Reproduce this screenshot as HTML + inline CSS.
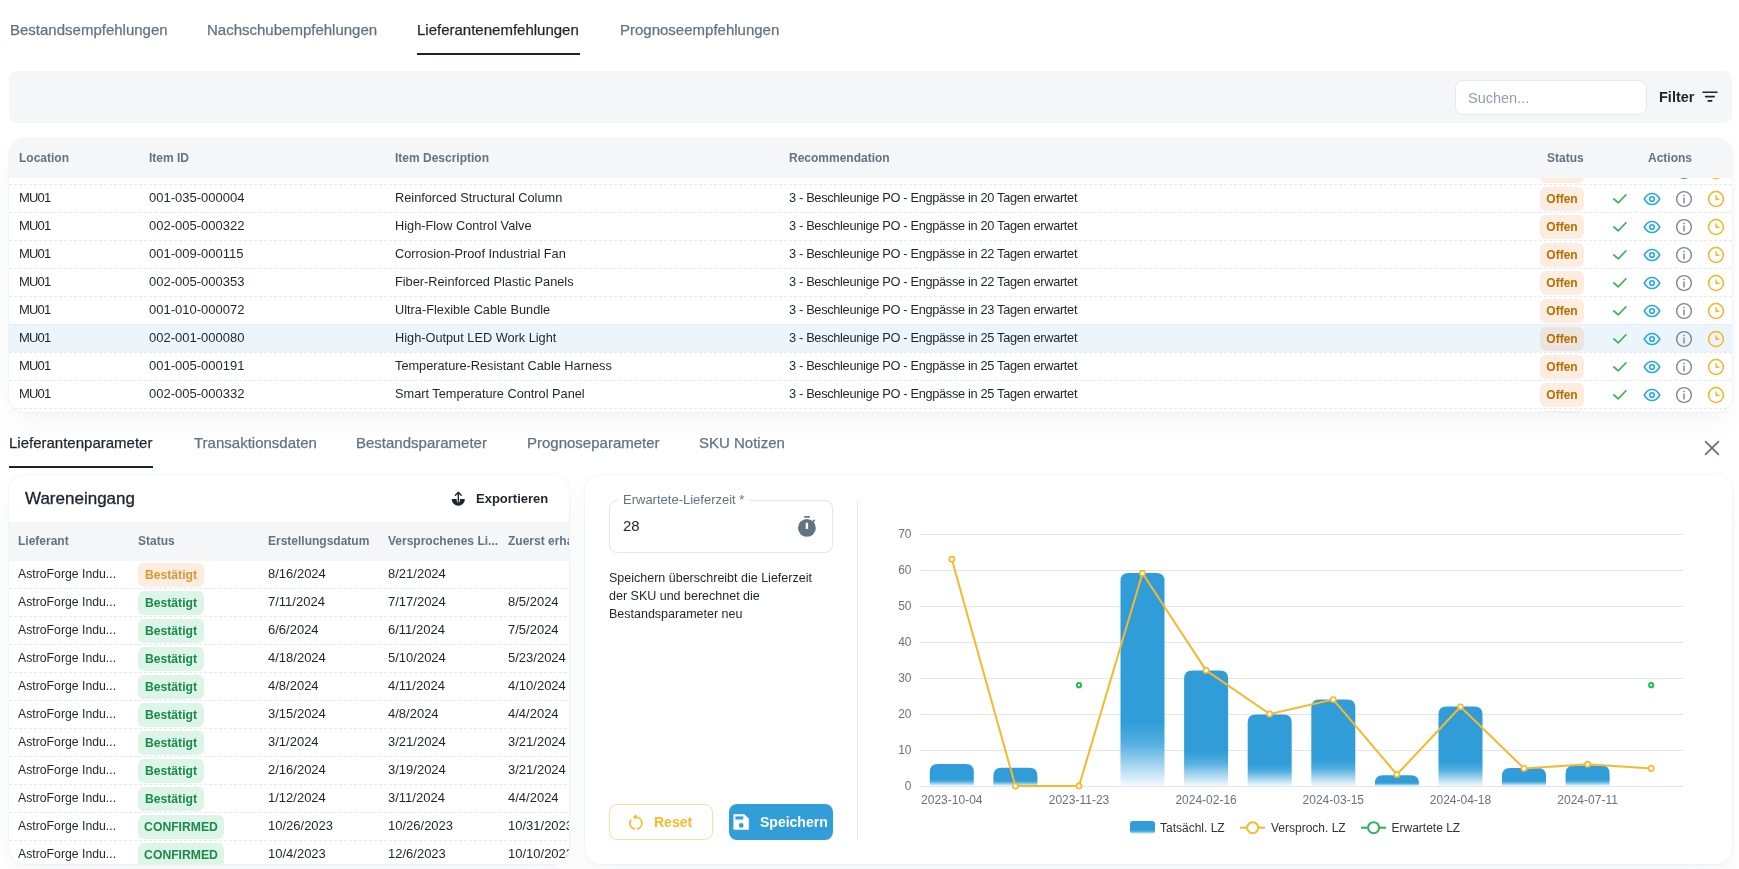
<!DOCTYPE html>
<html><head><meta charset="utf-8">
<style>
*{box-sizing:border-box;margin:0;padding:0}
html,body{width:1739px;height:869px;overflow:hidden;background:#fff;will-change:transform;font-family:"Liberation Sans",sans-serif;color:#1C252E}
.tab{position:absolute;font-size:15px;color:#637381;white-space:nowrap;line-height:18px;-webkit-text-stroke:0.25px currentColor}
.tab.on{color:#1C252E}
.uline{position:absolute;height:2px;background:#1A222B}
.filterbar{position:absolute;left:9px;top:71px;width:1723px;height:52px;background:#F4F6F8;border-radius:8px}
.search{position:absolute;left:1455px;top:80px;width:192px;height:35px;background:#fff;border:1px solid #E6E9EC;border-radius:8px}
.search span{position:absolute;left:12px;top:9px;font-size:14.5px;color:#919EAB;line-height:16px}
.filt{position:absolute;left:1659px;top:89px;font-size:14.5px;font-weight:bold;color:#1C252E;line-height:16px}
.card{position:absolute;background:#fff;border-radius:16px;box-shadow:0 0 2px 0 rgba(145,158,171,0.24),0 12px 24px -4px rgba(145,158,171,0.11);overflow:hidden}
.thead{position:absolute;left:0;top:0;right:0;height:40px;background:#F4F6F8}
.th{position:absolute;top:0;font-size:12px;font-weight:bold;color:#637381;white-space:nowrap;line-height:40px}
.tbody{position:absolute;left:0;top:40px;right:0;bottom:0;overflow:hidden}
.trow{position:absolute;left:0;right:0;height:28px;background-image:linear-gradient(to right,#E6E9ED 3px,transparent 3px);background-size:5px 1px;background-repeat:repeat-x;background-position:0 0}
.trow.hl{background-color:#EDF5FC}
.td{position:absolute;top:0;font-size:13px;color:#1C252E;white-space:nowrap;line-height:27px}
.desc{font-size:12.75px}
.rec{letter-spacing:-0.33px;font-size:12.8px;line-height:28px}
.badge{position:absolute;border-radius:6px;font-weight:bold;font-size:12px;text-align:center;line-height:24px;height:24px}
.offen{background:rgba(243,150,80,0.17);color:#B76E00;width:44px}
.ic{position:absolute;top:6px}
.ctitle{position:absolute;left:16px;top:15px;font-size:17px;-webkit-text-stroke:0.35px #1C252E;color:#1C252E;line-height:18px}
.exp{position:absolute;left:467px;top:16px;font-size:13px;font-weight:bold;color:#1C252E;line-height:16px}
.lhead{position:absolute;left:0;top:47px;width:560px;height:39px;background:#F4F6F8}
.lhead .th{line-height:39px}
.lrow{position:absolute;left:0;width:558px;height:28px;background-image:linear-gradient(to right,#E6E9ED 3px,transparent 3px);background-size:5px 1px;background-repeat:repeat-x;background-position:0 27px}
.ld{position:absolute;top:0;font-size:13px;color:#1C252E;white-space:nowrap;line-height:26.5px}
.astro{font-size:12.25px}
.lrow .badge{top:2px;height:23.5px;line-height:25px;font-size:12.2px}
.bo{background:#FDEDE0;color:#D69A33}
.bg{background:#DDF5E6;color:#1B8A4C}
.flabel{position:absolute;left:624px;top:492px;font-size:13px;color:#637381;line-height:15px;background:#fff;padding:0 5px;margin-left:-6px}
.fbox{position:absolute;left:609px;top:500px;width:224px;height:53px;border:1px solid #E3E7EB;border-radius:8px}
.fval{position:absolute;left:623px;top:517px;font-size:15px;color:#1C252E;line-height:18px}
.fdesc{position:absolute;left:609px;top:569px;width:215px;font-size:12.5px;color:#1C252E;line-height:18px}
.btn{position:absolute;top:804px;height:36px;border-radius:8px;font-size:14px;font-weight:bold;line-height:36px}
</style></head>
<body>
<div class="tab" style="left:10px;top:21px">Bestandsempfehlungen</div>
<div class="tab" style="left:207px;top:21px">Nachschubempfehlungen</div>
<div class="tab on" style="left:417px;top:21px">Lieferantenemfehlungen</div>
<div class="tab" style="left:620px;top:21px">Prognoseempfehlungen</div>
<div class="uline" style="left:417px;top:53px;width:163px"></div>

<div class="filterbar"></div>
<div class="search"><span>Suchen...</span></div>
<div class="filt">Filter</div>
<svg style="position:absolute;left:1701px;top:90px" width="18" height="14" viewBox="0 0 18 14"><path d="M2 2.3H16M4.6 6.6H13.2M7.2 10.9H10.7" stroke="#1C252E" stroke-width="1.6" stroke-linecap="round"/></svg>

<div class="card" style="left:9px;top:138px;width:1723px;height:274px">
 <div class="thead">
  <span class="th" style="left:10px">Location</span>
  <span class="th" style="left:140px">Item ID</span>
  <span class="th" style="left:386px">Item Description</span>
  <span class="th" style="left:780px">Recommendation</span>
  <span class="th" style="left:1538px">Status</span>
  <span class="th" style="left:1639px">Actions</span>
 </div>
 <div class="tbody">
<div class="trow" style="top:-22px"><div class="badge offen" style="left:1531px;top:3px">Offen</div><svg class="ic" style="left:1602px" width="18" height="18" viewBox="0 0 18 18"><path d="M2.8 8.9 L7.3 12.8 L15 4.8" fill="none" stroke="#2AB24E" stroke-width="1.6" stroke-linecap="round" stroke-linejoin="round"/></svg><svg class="ic" style="left:1634px" width="18" height="18" viewBox="0 0 18 18"><path d="M1.2 9 C3.3 5.4 6 3.4 9 3.4 C12 3.4 14.7 5.4 16.8 9 C14.7 12.6 12 14.6 9 14.6 C6 14.6 3.3 12.6 1.2 9 Z" fill="none" stroke="#28A8DD" stroke-width="1.5"/><circle cx="9" cy="9" r="2.3" fill="none" stroke="#28A8DD" stroke-width="1.6"/></svg><svg class="ic" style="left:1666px" width="18" height="18" viewBox="0 0 18 18"><circle cx="9" cy="9" r="7.4" fill="none" stroke="#7B8692" stroke-width="1.4"/><path d="M9 8 V13" stroke="#7B8692" stroke-width="1.4" stroke-linecap="round"/><circle cx="9" cy="5.4" r="0.8" fill="#7B8692"/></svg><svg class="ic" style="left:1698px" width="18" height="18" viewBox="0 0 18 18"><circle cx="9" cy="9" r="7.4" fill="none" stroke="#F8B51E" stroke-width="1.5"/><path d="M9.2 5.4 V9.2 H12.4" fill="none" stroke="#F8B51E" stroke-width="1.5"/></svg></div>
<div class="trow" style="top:6px"><span class="td" style="left:10px;letter-spacing:-0.8px">MU01</span><span class="td" style="left:140px">001-035-000004</span><span class="td desc" style="left:386px">Reinforced Structural Column</span><span class="td rec" style="left:780px">3 - Beschleunige PO - Engpässe in 20 Tagen erwartet</span><div class="badge offen" style="left:1531px;top:3px">Offen</div><svg class="ic" style="left:1602px" width="18" height="18" viewBox="0 0 18 18"><path d="M2.8 8.9 L7.3 12.8 L15 4.8" fill="none" stroke="#2AB24E" stroke-width="1.6" stroke-linecap="round" stroke-linejoin="round"/></svg><svg class="ic" style="left:1634px" width="18" height="18" viewBox="0 0 18 18"><path d="M1.2 9 C3.3 5.4 6 3.4 9 3.4 C12 3.4 14.7 5.4 16.8 9 C14.7 12.6 12 14.6 9 14.6 C6 14.6 3.3 12.6 1.2 9 Z" fill="none" stroke="#28A8DD" stroke-width="1.5"/><circle cx="9" cy="9" r="2.3" fill="none" stroke="#28A8DD" stroke-width="1.6"/></svg><svg class="ic" style="left:1666px" width="18" height="18" viewBox="0 0 18 18"><circle cx="9" cy="9" r="7.4" fill="none" stroke="#7B8692" stroke-width="1.4"/><path d="M9 8 V13" stroke="#7B8692" stroke-width="1.4" stroke-linecap="round"/><circle cx="9" cy="5.4" r="0.8" fill="#7B8692"/></svg><svg class="ic" style="left:1698px" width="18" height="18" viewBox="0 0 18 18"><circle cx="9" cy="9" r="7.4" fill="none" stroke="#F8B51E" stroke-width="1.5"/><path d="M9.2 5.4 V9.2 H12.4" fill="none" stroke="#F8B51E" stroke-width="1.5"/></svg></div>
<div class="trow" style="top:34px"><span class="td" style="left:10px;letter-spacing:-0.8px">MU01</span><span class="td" style="left:140px">002-005-000322</span><span class="td desc" style="left:386px">High-Flow Control Valve</span><span class="td rec" style="left:780px">3 - Beschleunige PO - Engpässe in 20 Tagen erwartet</span><div class="badge offen" style="left:1531px;top:3px">Offen</div><svg class="ic" style="left:1602px" width="18" height="18" viewBox="0 0 18 18"><path d="M2.8 8.9 L7.3 12.8 L15 4.8" fill="none" stroke="#2AB24E" stroke-width="1.6" stroke-linecap="round" stroke-linejoin="round"/></svg><svg class="ic" style="left:1634px" width="18" height="18" viewBox="0 0 18 18"><path d="M1.2 9 C3.3 5.4 6 3.4 9 3.4 C12 3.4 14.7 5.4 16.8 9 C14.7 12.6 12 14.6 9 14.6 C6 14.6 3.3 12.6 1.2 9 Z" fill="none" stroke="#28A8DD" stroke-width="1.5"/><circle cx="9" cy="9" r="2.3" fill="none" stroke="#28A8DD" stroke-width="1.6"/></svg><svg class="ic" style="left:1666px" width="18" height="18" viewBox="0 0 18 18"><circle cx="9" cy="9" r="7.4" fill="none" stroke="#7B8692" stroke-width="1.4"/><path d="M9 8 V13" stroke="#7B8692" stroke-width="1.4" stroke-linecap="round"/><circle cx="9" cy="5.4" r="0.8" fill="#7B8692"/></svg><svg class="ic" style="left:1698px" width="18" height="18" viewBox="0 0 18 18"><circle cx="9" cy="9" r="7.4" fill="none" stroke="#F8B51E" stroke-width="1.5"/><path d="M9.2 5.4 V9.2 H12.4" fill="none" stroke="#F8B51E" stroke-width="1.5"/></svg></div>
<div class="trow" style="top:62px"><span class="td" style="left:10px;letter-spacing:-0.8px">MU01</span><span class="td" style="left:140px">001-009-000115</span><span class="td desc" style="left:386px">Corrosion-Proof Industrial Fan</span><span class="td rec" style="left:780px">3 - Beschleunige PO - Engpässe in 22 Tagen erwartet</span><div class="badge offen" style="left:1531px;top:3px">Offen</div><svg class="ic" style="left:1602px" width="18" height="18" viewBox="0 0 18 18"><path d="M2.8 8.9 L7.3 12.8 L15 4.8" fill="none" stroke="#2AB24E" stroke-width="1.6" stroke-linecap="round" stroke-linejoin="round"/></svg><svg class="ic" style="left:1634px" width="18" height="18" viewBox="0 0 18 18"><path d="M1.2 9 C3.3 5.4 6 3.4 9 3.4 C12 3.4 14.7 5.4 16.8 9 C14.7 12.6 12 14.6 9 14.6 C6 14.6 3.3 12.6 1.2 9 Z" fill="none" stroke="#28A8DD" stroke-width="1.5"/><circle cx="9" cy="9" r="2.3" fill="none" stroke="#28A8DD" stroke-width="1.6"/></svg><svg class="ic" style="left:1666px" width="18" height="18" viewBox="0 0 18 18"><circle cx="9" cy="9" r="7.4" fill="none" stroke="#7B8692" stroke-width="1.4"/><path d="M9 8 V13" stroke="#7B8692" stroke-width="1.4" stroke-linecap="round"/><circle cx="9" cy="5.4" r="0.8" fill="#7B8692"/></svg><svg class="ic" style="left:1698px" width="18" height="18" viewBox="0 0 18 18"><circle cx="9" cy="9" r="7.4" fill="none" stroke="#F8B51E" stroke-width="1.5"/><path d="M9.2 5.4 V9.2 H12.4" fill="none" stroke="#F8B51E" stroke-width="1.5"/></svg></div>
<div class="trow" style="top:90px"><span class="td" style="left:10px;letter-spacing:-0.8px">MU01</span><span class="td" style="left:140px">002-005-000353</span><span class="td desc" style="left:386px">Fiber-Reinforced Plastic Panels</span><span class="td rec" style="left:780px">3 - Beschleunige PO - Engpässe in 22 Tagen erwartet</span><div class="badge offen" style="left:1531px;top:3px">Offen</div><svg class="ic" style="left:1602px" width="18" height="18" viewBox="0 0 18 18"><path d="M2.8 8.9 L7.3 12.8 L15 4.8" fill="none" stroke="#2AB24E" stroke-width="1.6" stroke-linecap="round" stroke-linejoin="round"/></svg><svg class="ic" style="left:1634px" width="18" height="18" viewBox="0 0 18 18"><path d="M1.2 9 C3.3 5.4 6 3.4 9 3.4 C12 3.4 14.7 5.4 16.8 9 C14.7 12.6 12 14.6 9 14.6 C6 14.6 3.3 12.6 1.2 9 Z" fill="none" stroke="#28A8DD" stroke-width="1.5"/><circle cx="9" cy="9" r="2.3" fill="none" stroke="#28A8DD" stroke-width="1.6"/></svg><svg class="ic" style="left:1666px" width="18" height="18" viewBox="0 0 18 18"><circle cx="9" cy="9" r="7.4" fill="none" stroke="#7B8692" stroke-width="1.4"/><path d="M9 8 V13" stroke="#7B8692" stroke-width="1.4" stroke-linecap="round"/><circle cx="9" cy="5.4" r="0.8" fill="#7B8692"/></svg><svg class="ic" style="left:1698px" width="18" height="18" viewBox="0 0 18 18"><circle cx="9" cy="9" r="7.4" fill="none" stroke="#F8B51E" stroke-width="1.5"/><path d="M9.2 5.4 V9.2 H12.4" fill="none" stroke="#F8B51E" stroke-width="1.5"/></svg></div>
<div class="trow" style="top:118px"><span class="td" style="left:10px;letter-spacing:-0.8px">MU01</span><span class="td" style="left:140px">001-010-000072</span><span class="td desc" style="left:386px">Ultra-Flexible Cable Bundle</span><span class="td rec" style="left:780px">3 - Beschleunige PO - Engpässe in 23 Tagen erwartet</span><div class="badge offen" style="left:1531px;top:3px">Offen</div><svg class="ic" style="left:1602px" width="18" height="18" viewBox="0 0 18 18"><path d="M2.8 8.9 L7.3 12.8 L15 4.8" fill="none" stroke="#2AB24E" stroke-width="1.6" stroke-linecap="round" stroke-linejoin="round"/></svg><svg class="ic" style="left:1634px" width="18" height="18" viewBox="0 0 18 18"><path d="M1.2 9 C3.3 5.4 6 3.4 9 3.4 C12 3.4 14.7 5.4 16.8 9 C14.7 12.6 12 14.6 9 14.6 C6 14.6 3.3 12.6 1.2 9 Z" fill="none" stroke="#28A8DD" stroke-width="1.5"/><circle cx="9" cy="9" r="2.3" fill="none" stroke="#28A8DD" stroke-width="1.6"/></svg><svg class="ic" style="left:1666px" width="18" height="18" viewBox="0 0 18 18"><circle cx="9" cy="9" r="7.4" fill="none" stroke="#7B8692" stroke-width="1.4"/><path d="M9 8 V13" stroke="#7B8692" stroke-width="1.4" stroke-linecap="round"/><circle cx="9" cy="5.4" r="0.8" fill="#7B8692"/></svg><svg class="ic" style="left:1698px" width="18" height="18" viewBox="0 0 18 18"><circle cx="9" cy="9" r="7.4" fill="none" stroke="#F8B51E" stroke-width="1.5"/><path d="M9.2 5.4 V9.2 H12.4" fill="none" stroke="#F8B51E" stroke-width="1.5"/></svg></div>
<div class="trow hl" style="top:146px"><span class="td" style="left:10px;letter-spacing:-0.8px">MU01</span><span class="td" style="left:140px">002-001-000080</span><span class="td desc" style="left:386px">High-Output LED Work Light</span><span class="td rec" style="left:780px">3 - Beschleunige PO - Engpässe in 25 Tagen erwartet</span><div class="badge offen" style="left:1531px;top:3px">Offen</div><svg class="ic" style="left:1602px" width="18" height="18" viewBox="0 0 18 18"><path d="M2.8 8.9 L7.3 12.8 L15 4.8" fill="none" stroke="#2AB24E" stroke-width="1.6" stroke-linecap="round" stroke-linejoin="round"/></svg><svg class="ic" style="left:1634px" width="18" height="18" viewBox="0 0 18 18"><path d="M1.2 9 C3.3 5.4 6 3.4 9 3.4 C12 3.4 14.7 5.4 16.8 9 C14.7 12.6 12 14.6 9 14.6 C6 14.6 3.3 12.6 1.2 9 Z" fill="none" stroke="#28A8DD" stroke-width="1.5"/><circle cx="9" cy="9" r="2.3" fill="none" stroke="#28A8DD" stroke-width="1.6"/></svg><svg class="ic" style="left:1666px" width="18" height="18" viewBox="0 0 18 18"><circle cx="9" cy="9" r="7.4" fill="none" stroke="#7B8692" stroke-width="1.4"/><path d="M9 8 V13" stroke="#7B8692" stroke-width="1.4" stroke-linecap="round"/><circle cx="9" cy="5.4" r="0.8" fill="#7B8692"/></svg><svg class="ic" style="left:1698px" width="18" height="18" viewBox="0 0 18 18"><circle cx="9" cy="9" r="7.4" fill="none" stroke="#F8B51E" stroke-width="1.5"/><path d="M9.2 5.4 V9.2 H12.4" fill="none" stroke="#F8B51E" stroke-width="1.5"/></svg></div>
<div class="trow" style="top:174px"><span class="td" style="left:10px;letter-spacing:-0.8px">MU01</span><span class="td" style="left:140px">001-005-000191</span><span class="td desc" style="left:386px">Temperature-Resistant Cable Harness</span><span class="td rec" style="left:780px">3 - Beschleunige PO - Engpässe in 25 Tagen erwartet</span><div class="badge offen" style="left:1531px;top:3px">Offen</div><svg class="ic" style="left:1602px" width="18" height="18" viewBox="0 0 18 18"><path d="M2.8 8.9 L7.3 12.8 L15 4.8" fill="none" stroke="#2AB24E" stroke-width="1.6" stroke-linecap="round" stroke-linejoin="round"/></svg><svg class="ic" style="left:1634px" width="18" height="18" viewBox="0 0 18 18"><path d="M1.2 9 C3.3 5.4 6 3.4 9 3.4 C12 3.4 14.7 5.4 16.8 9 C14.7 12.6 12 14.6 9 14.6 C6 14.6 3.3 12.6 1.2 9 Z" fill="none" stroke="#28A8DD" stroke-width="1.5"/><circle cx="9" cy="9" r="2.3" fill="none" stroke="#28A8DD" stroke-width="1.6"/></svg><svg class="ic" style="left:1666px" width="18" height="18" viewBox="0 0 18 18"><circle cx="9" cy="9" r="7.4" fill="none" stroke="#7B8692" stroke-width="1.4"/><path d="M9 8 V13" stroke="#7B8692" stroke-width="1.4" stroke-linecap="round"/><circle cx="9" cy="5.4" r="0.8" fill="#7B8692"/></svg><svg class="ic" style="left:1698px" width="18" height="18" viewBox="0 0 18 18"><circle cx="9" cy="9" r="7.4" fill="none" stroke="#F8B51E" stroke-width="1.5"/><path d="M9.2 5.4 V9.2 H12.4" fill="none" stroke="#F8B51E" stroke-width="1.5"/></svg></div>
<div class="trow" style="top:202px"><span class="td" style="left:10px;letter-spacing:-0.8px">MU01</span><span class="td" style="left:140px">002-005-000332</span><span class="td desc" style="left:386px">Smart Temperature Control Panel</span><span class="td rec" style="left:780px">3 - Beschleunige PO - Engpässe in 25 Tagen erwartet</span><div class="badge offen" style="left:1531px;top:3px">Offen</div><svg class="ic" style="left:1602px" width="18" height="18" viewBox="0 0 18 18"><path d="M2.8 8.9 L7.3 12.8 L15 4.8" fill="none" stroke="#2AB24E" stroke-width="1.6" stroke-linecap="round" stroke-linejoin="round"/></svg><svg class="ic" style="left:1634px" width="18" height="18" viewBox="0 0 18 18"><path d="M1.2 9 C3.3 5.4 6 3.4 9 3.4 C12 3.4 14.7 5.4 16.8 9 C14.7 12.6 12 14.6 9 14.6 C6 14.6 3.3 12.6 1.2 9 Z" fill="none" stroke="#28A8DD" stroke-width="1.5"/><circle cx="9" cy="9" r="2.3" fill="none" stroke="#28A8DD" stroke-width="1.6"/></svg><svg class="ic" style="left:1666px" width="18" height="18" viewBox="0 0 18 18"><circle cx="9" cy="9" r="7.4" fill="none" stroke="#7B8692" stroke-width="1.4"/><path d="M9 8 V13" stroke="#7B8692" stroke-width="1.4" stroke-linecap="round"/><circle cx="9" cy="5.4" r="0.8" fill="#7B8692"/></svg><svg class="ic" style="left:1698px" width="18" height="18" viewBox="0 0 18 18"><circle cx="9" cy="9" r="7.4" fill="none" stroke="#F8B51E" stroke-width="1.5"/><path d="M9.2 5.4 V9.2 H12.4" fill="none" stroke="#F8B51E" stroke-width="1.5"/></svg></div>
<div class="trow" style="top:230px"><div class="badge offen" style="left:1531px;top:3px">Offen</div><svg class="ic" style="left:1602px" width="18" height="18" viewBox="0 0 18 18"><path d="M2.8 8.9 L7.3 12.8 L15 4.8" fill="none" stroke="#2AB24E" stroke-width="1.6" stroke-linecap="round" stroke-linejoin="round"/></svg><svg class="ic" style="left:1634px" width="18" height="18" viewBox="0 0 18 18"><path d="M1.2 9 C3.3 5.4 6 3.4 9 3.4 C12 3.4 14.7 5.4 16.8 9 C14.7 12.6 12 14.6 9 14.6 C6 14.6 3.3 12.6 1.2 9 Z" fill="none" stroke="#28A8DD" stroke-width="1.5"/><circle cx="9" cy="9" r="2.3" fill="none" stroke="#28A8DD" stroke-width="1.6"/></svg><svg class="ic" style="left:1666px" width="18" height="18" viewBox="0 0 18 18"><circle cx="9" cy="9" r="7.4" fill="none" stroke="#7B8692" stroke-width="1.4"/><path d="M9 8 V13" stroke="#7B8692" stroke-width="1.4" stroke-linecap="round"/><circle cx="9" cy="5.4" r="0.8" fill="#7B8692"/></svg><svg class="ic" style="left:1698px" width="18" height="18" viewBox="0 0 18 18"><circle cx="9" cy="9" r="7.4" fill="none" stroke="#F8B51E" stroke-width="1.5"/><path d="M9.2 5.4 V9.2 H12.4" fill="none" stroke="#F8B51E" stroke-width="1.5"/></svg></div>

 </div>
</div>

<div class="tab on" style="left:9px;top:434px">Lieferantenparameter</div>
<div class="tab" style="left:194px;top:434px">Transaktionsdaten</div>
<div class="tab" style="left:356px;top:434px">Bestandsparameter</div>
<div class="tab" style="left:527px;top:434px">Prognoseparameter</div>
<div class="tab" style="left:699px;top:434px">SKU Notizen</div>
<div class="uline" style="left:9px;top:466px;width:144px"></div>
<svg style="position:absolute;left:1702px;top:438px" width="20" height="20" viewBox="0 0 20 20"><path d="M3.6 3.6L16.4 16.4M16.4 3.6L3.6 16.4" stroke="#637381" stroke-width="1.8" stroke-linecap="round"/></svg>

<div class="card" style="left:9px;top:475px;width:560px;height:389px">
 <div class="ctitle">Wareneingang</div>
 <svg style="position:absolute;left:441px;top:16px" width="16" height="16" viewBox="0 0 16 16"><path d="M1.7 8.1H6.7V9.8A1.6 1.6 0 0 0 9.9 9.8V8.1H14.9A6.6 6.6 0 0 1 1.7 8.1Z" fill="#1C252E"/><path d="M8.3 10.6V1.8M5.4 4.3L8.3 1.3L11.2 4.3" fill="none" stroke="#1C252E" stroke-width="1.35" stroke-linecap="round" stroke-linejoin="round"/></svg>
 <div class="exp">Exportieren</div>
 <div class="lhead">
  <span class="th" style="left:9px">Lieferant</span>
  <span class="th" style="left:129px">Status</span>
  <span class="th" style="left:259px">Erstellungsdatum</span>
  <span class="th" style="left:379px">Versprochenes Li...</span>
  <span class="th" style="left:499px">Zuerst erhalten</span>
 </div>
<div class="lrow" style="top:86px"><span class="ld astro" style="left:9px">AstroForge Indu...</span><div class="badge bo" style="left:129px;width:66px">Bestätigt</div><span class="ld" style="left:259px">8/16/2024</span><span class="ld" style="left:379px">8/21/2024</span><span class="ld" style="left:499px"></span></div>
<div class="lrow" style="top:114px"><span class="ld astro" style="left:9px">AstroForge Indu...</span><div class="badge bg" style="left:129px;width:66px">Bestätigt</div><span class="ld" style="left:259px">7/11/2024</span><span class="ld" style="left:379px">7/17/2024</span><span class="ld" style="left:499px">8/5/2024</span></div>
<div class="lrow" style="top:142px"><span class="ld astro" style="left:9px">AstroForge Indu...</span><div class="badge bg" style="left:129px;width:66px">Bestätigt</div><span class="ld" style="left:259px">6/6/2024</span><span class="ld" style="left:379px">6/11/2024</span><span class="ld" style="left:499px">7/5/2024</span></div>
<div class="lrow" style="top:170px"><span class="ld astro" style="left:9px">AstroForge Indu...</span><div class="badge bg" style="left:129px;width:66px">Bestätigt</div><span class="ld" style="left:259px">4/18/2024</span><span class="ld" style="left:379px">5/10/2024</span><span class="ld" style="left:499px">5/23/2024</span></div>
<div class="lrow" style="top:198px"><span class="ld astro" style="left:9px">AstroForge Indu...</span><div class="badge bg" style="left:129px;width:66px">Bestätigt</div><span class="ld" style="left:259px">4/8/2024</span><span class="ld" style="left:379px">4/11/2024</span><span class="ld" style="left:499px">4/10/2024</span></div>
<div class="lrow" style="top:226px"><span class="ld astro" style="left:9px">AstroForge Indu...</span><div class="badge bg" style="left:129px;width:66px">Bestätigt</div><span class="ld" style="left:259px">3/15/2024</span><span class="ld" style="left:379px">4/8/2024</span><span class="ld" style="left:499px">4/4/2024</span></div>
<div class="lrow" style="top:254px"><span class="ld astro" style="left:9px">AstroForge Indu...</span><div class="badge bg" style="left:129px;width:66px">Bestätigt</div><span class="ld" style="left:259px">3/1/2024</span><span class="ld" style="left:379px">3/21/2024</span><span class="ld" style="left:499px">3/21/2024</span></div>
<div class="lrow" style="top:282px"><span class="ld astro" style="left:9px">AstroForge Indu...</span><div class="badge bg" style="left:129px;width:66px">Bestätigt</div><span class="ld" style="left:259px">2/16/2024</span><span class="ld" style="left:379px">3/19/2024</span><span class="ld" style="left:499px">3/21/2024</span></div>
<div class="lrow" style="top:310px"><span class="ld astro" style="left:9px">AstroForge Indu...</span><div class="badge bg" style="left:129px;width:66px">Bestätigt</div><span class="ld" style="left:259px">1/12/2024</span><span class="ld" style="left:379px">3/11/2024</span><span class="ld" style="left:499px">4/4/2024</span></div>
<div class="lrow" style="top:338px"><span class="ld astro" style="left:9px">AstroForge Indu...</span><div class="badge bg" style="left:129px;width:86px">CONFIRMED</div><span class="ld" style="left:259px">10/26/2023</span><span class="ld" style="left:379px">10/26/2023</span><span class="ld" style="left:499px">10/31/2023</span></div>
<div class="lrow" style="top:366px"><span class="ld astro" style="left:9px">AstroForge Indu...</span><div class="badge bg" style="left:129px;width:86px">CONFIRMED</div><span class="ld" style="left:259px">10/4/2023</span><span class="ld" style="left:379px">12/6/2023</span><span class="ld" style="left:499px">10/10/2023</span></div>

</div>

<div class="card" style="left:585px;top:475px;width:1147px;height:389px"></div>
<div class="fbox"></div>
<div class="flabel">Erwartete-Lieferzeit *</div>
<div class="fval">28</div>
<svg style="position:absolute;left:797px;top:515px" width="20" height="22" viewBox="0 0 20 22"><rect x="7.1" y="1" width="5.8" height="1.7" rx="0.5" fill="#637381"/><circle cx="9.9" cy="12.9" r="8.9" fill="#637381"/><path d="M15.6 6.8L17.3 5.3" stroke="#637381" stroke-width="1.6" stroke-linecap="round"/><rect x="8.7" y="7.8" width="2.4" height="6.1" fill="#fff"/></svg>
<div class="fdesc">Speichern überschreibt die Lieferzeit der SKU und berechnet die Bestandsparameter neu</div>
<div class="btn" style="left:609px;width:104px;border:1px solid #FDDD98;color:#F7BA2A;line-height:34px"><span style="position:absolute;left:44px">Reset</span></div>
<svg style="position:absolute;left:626px;top:813px" width="20" height="20" viewBox="0 0 20 20"><path d="M9.9 4.2A6 6 0 0 1 10.94 16.11M8.86 16.11A6 6 0 0 1 4.99 6.76" fill="none" stroke="#F7BA2A" stroke-width="1.7"/><path d="M6.9 3.9L10.4 0.9L10.4 6.9Z" fill="#F7BA2A"/></svg>
<div class="btn" style="left:729px;width:104px;background:#319ED9;color:#fff"><span style="position:absolute;left:31px">Speichern</span></div>
<svg style="position:absolute;left:732px;top:813px" width="18" height="18" viewBox="0 0 18 18"><path d="M1.8 1.4H12.2L16.6 5.8V16.4H1.8Z" fill="#fff" stroke="#fff" stroke-width="0.6" stroke-linejoin="round"/><rect x="3.4" y="3.4" width="7.9" height="3.1" fill="#319ED9"/><circle cx="9.2" cy="12.4" r="2.4" fill="#319ED9"/></svg>
<div style="position:absolute;left:857px;top:500px;width:1px;height:340px;background:#E8EBEE"></div>
<svg style="position:absolute;left:0;top:0" width="1739" height="869" viewBox="0 0 1739 869">
<defs><linearGradient id="bg" x1="0" y1="0" x2="0" y2="1"><stop offset="0" stop-color="#309DD8"/><stop offset="0.7" stop-color="#309DD8"/><stop offset="0.8" stop-color="#53AFE0"/><stop offset="1" stop-color="#F4FAFD"/></linearGradient></defs>
<line x1="920.0" x2="1683.0" y1="786.5" y2="786.5" stroke="#E0E6F1" stroke-width="1"/>
<text x="911.5" y="790.0" text-anchor="end" font-size="12" fill="#6E7079" font-family="Liberation Sans">0</text>
<line x1="920.0" x2="1683.0" y1="750.5" y2="750.5" stroke="#E0E6F1" stroke-width="1"/>
<text x="911.5" y="754.0" text-anchor="end" font-size="12" fill="#6E7079" font-family="Liberation Sans">10</text>
<line x1="920.0" x2="1683.0" y1="714.5" y2="714.5" stroke="#E0E6F1" stroke-width="1"/>
<text x="911.5" y="718.0" text-anchor="end" font-size="12" fill="#6E7079" font-family="Liberation Sans">20</text>
<line x1="920.0" x2="1683.0" y1="678.5" y2="678.5" stroke="#E0E6F1" stroke-width="1"/>
<text x="911.5" y="682.0" text-anchor="end" font-size="12" fill="#6E7079" font-family="Liberation Sans">30</text>
<line x1="920.0" x2="1683.0" y1="642.5" y2="642.5" stroke="#E0E6F1" stroke-width="1"/>
<text x="911.5" y="646.0" text-anchor="end" font-size="12" fill="#6E7079" font-family="Liberation Sans">40</text>
<line x1="920.0" x2="1683.0" y1="606.5" y2="606.5" stroke="#E0E6F1" stroke-width="1"/>
<text x="911.5" y="610.0" text-anchor="end" font-size="12" fill="#6E7079" font-family="Liberation Sans">50</text>
<line x1="920.0" x2="1683.0" y1="570.5" y2="570.5" stroke="#E0E6F1" stroke-width="1"/>
<text x="911.5" y="574.0" text-anchor="end" font-size="12" fill="#6E7079" font-family="Liberation Sans">60</text>
<line x1="920.0" x2="1683.0" y1="534.5" y2="534.5" stroke="#E0E6F1" stroke-width="1"/>
<text x="911.5" y="538.0" text-anchor="end" font-size="12" fill="#6E7079" font-family="Liberation Sans">70</text>
<text x="951.8" y="803.5" text-anchor="middle" font-size="12" fill="#6E7079" font-family="Liberation Sans">2023-10-04</text>
<text x="1079.0" y="803.5" text-anchor="middle" font-size="12" fill="#6E7079" font-family="Liberation Sans">2023-11-23</text>
<text x="1206.1" y="803.5" text-anchor="middle" font-size="12" fill="#6E7079" font-family="Liberation Sans">2024-02-16</text>
<text x="1333.3" y="803.5" text-anchor="middle" font-size="12" fill="#6E7079" font-family="Liberation Sans">2024-03-15</text>
<text x="1460.5" y="803.5" text-anchor="middle" font-size="12" fill="#6E7079" font-family="Liberation Sans">2024-04-18</text>
<text x="1587.6" y="803.5" text-anchor="middle" font-size="12" fill="#6E7079" font-family="Liberation Sans">2024-07-11</text>
<path d="M929.8 786.0 V772.0 Q929.8 764.0 937.8 764.0 H965.8 Q973.8 764.0 973.8 772.0 V786.0 Z" fill="url(#bg)"/>
<path d="M993.4 786.0 V775.8 Q993.4 767.8 1001.4 767.8 H1029.4 Q1037.4 767.8 1037.4 775.8 V786.0 Z" fill="url(#bg)"/>
<path d="M1120.5 786.0 V580.9 Q1120.5 572.9 1128.5 572.9 H1156.5 Q1164.5 572.9 1164.5 580.9 V786.0 Z" fill="url(#bg)"/>
<path d="M1184.1 786.0 V678.4 Q1184.1 670.4 1192.1 670.4 H1220.1 Q1228.1 670.4 1228.1 678.4 V786.0 Z" fill="url(#bg)"/>
<path d="M1247.7 786.0 V722.4 Q1247.7 714.4 1255.7 714.4 H1283.7 Q1291.7 714.4 1291.7 722.4 V786.0 Z" fill="url(#bg)"/>
<path d="M1311.3 786.0 V707.6 Q1311.3 699.6 1319.3 699.6 H1347.3 Q1355.3 699.6 1355.3 707.6 V786.0 Z" fill="url(#bg)"/>
<path d="M1374.9 786.0 V783.2 Q1374.9 775.2 1382.9 775.2 H1410.9 Q1418.9 775.2 1418.9 783.2 V786.0 Z" fill="url(#bg)"/>
<path d="M1438.5 786.0 V714.6 Q1438.5 706.6 1446.5 706.6 H1474.5 Q1482.5 706.6 1482.5 714.6 V786.0 Z" fill="url(#bg)"/>
<path d="M1502.0 786.0 V776.0 Q1502.0 768.0 1510.0 768.0 H1538.0 Q1546.0 768.0 1546.0 776.0 V786.0 Z" fill="url(#bg)"/>
<path d="M1565.6 786.0 V773.5 Q1565.6 765.5 1573.6 765.5 H1601.6 Q1609.6 765.5 1609.6 773.5 V786.0 Z" fill="url(#bg)"/>
<polyline fill="none" stroke="#F8B82D" stroke-width="2" stroke-linejoin="round" points="951.8,559.2 1015.4,786.0 1079.0,786.0 1142.5,573.2 1206.1,670.4 1269.7,714.0 1333.3,699.6 1396.9,774.5 1460.5,706.8 1524.0,768.4 1587.6,764.2 1651.2,768.4"/>
<circle cx="951.8" cy="559.2" r="2.6" fill="#fff" stroke="#F8B82D" stroke-width="1.6"/>
<circle cx="1015.4" cy="786.0" r="2.6" fill="#fff" stroke="#F8B82D" stroke-width="1.6"/>
<circle cx="1079.0" cy="786.0" r="2.6" fill="#fff" stroke="#F8B82D" stroke-width="1.6"/>
<circle cx="1142.5" cy="573.2" r="2.6" fill="#fff" stroke="#F8B82D" stroke-width="1.6"/>
<circle cx="1206.1" cy="670.4" r="2.6" fill="#fff" stroke="#F8B82D" stroke-width="1.6"/>
<circle cx="1269.7" cy="714.0" r="2.6" fill="#fff" stroke="#F8B82D" stroke-width="1.6"/>
<circle cx="1333.3" cy="699.6" r="2.6" fill="#fff" stroke="#F8B82D" stroke-width="1.6"/>
<circle cx="1396.9" cy="774.5" r="2.6" fill="#fff" stroke="#F8B82D" stroke-width="1.6"/>
<circle cx="1460.5" cy="706.8" r="2.6" fill="#fff" stroke="#F8B82D" stroke-width="1.6"/>
<circle cx="1524.0" cy="768.4" r="2.6" fill="#fff" stroke="#F8B82D" stroke-width="1.6"/>
<circle cx="1587.6" cy="764.2" r="2.6" fill="#fff" stroke="#F8B82D" stroke-width="1.6"/>
<circle cx="1651.2" cy="768.4" r="2.6" fill="#fff" stroke="#F8B82D" stroke-width="1.6"/>
<circle cx="1079.0" cy="685.2" r="2.1" fill="#fff" stroke="#24BD55" stroke-width="2"/>
<circle cx="1651.2" cy="685.2" r="2.1" fill="#fff" stroke="#24BD55" stroke-width="2"/>
<rect x="1130" y="821" width="25" height="13" rx="3" fill="url(#bg)"/>
<text x="1160" y="832" font-size="12" fill="#333" font-family="Liberation Sans">Tatsächl. LZ</text>
<line x1="1240" x2="1265" y1="827.7" y2="827.7" stroke="#F8B82D" stroke-width="2"/><circle cx="1252.7" cy="827.7" r="5.5" fill="#fff" stroke="#F8B82D" stroke-width="2"/>
<text x="1271" y="832" font-size="12" fill="#333" font-family="Liberation Sans">Versproch. LZ</text>
<line x1="1361" x2="1386" y1="827.7" y2="827.7" stroke="#2DB35A" stroke-width="2"/><circle cx="1373.6" cy="827.7" r="5.5" fill="#fff" stroke="#2DB35A" stroke-width="2"/>
<text x="1391.5" y="832" font-size="12" fill="#333" font-family="Liberation Sans">Erwartete LZ</text>
</svg>


</body></html>
